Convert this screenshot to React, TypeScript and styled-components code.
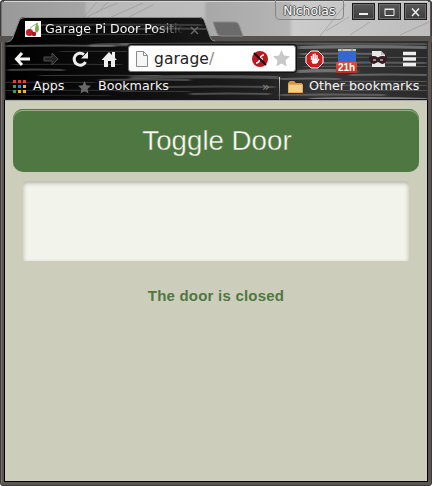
import React from "react";
import styled, { createGlobalStyle } from "styled-components";

const Global = createGlobalStyle`
  * { box-sizing: border-box; }
  body { margin: 0; background: #fff; overflow: hidden; }
`;

const Frame = styled.div`
  position: relative;
  width: 432px;
  height: 486px;
  display: flex;
  flex-direction: column;
  padding: 0 5px 5px;
  overflow: hidden;
  border-radius: 4px;
  background: #5b5451;
  font-family: "DejaVu Sans", sans-serif;
  box-shadow: inset 0 0 0 1px #3d3b3a, inset 2px 0 #77716e;
`;
const Backdrop = styled.svg`
  position: absolute;
  left: 0;
  top: 0;
`;
const TitleBar = styled.header`
  position: relative;
  height: 41px;
  display: flex;
  align-items: flex-start;
`;
const Tab = styled.div`
  display: flex;
  align-items: center;
  width: 208px;
  height: 24px;
  margin-top: 17px;
  padding-left: 20px;
`;
const TabTitle = styled.span`
  flex: none;
  width: 146px;
  margin-left: 4px;
  white-space: nowrap;
  font-size: 12.6px;
  line-height: 20px;
  color: #f4f4f4;
  mask-image: linear-gradient(90deg, #000 108px, transparent 139px);
`;
const TabClose = styled.svg`
  flex: none;
  margin-left: -1px;
  margin-top: 2px;
`;
const UserBadge = styled.div`
  width: 70px;
  height: 20px;
  margin-left: 63px;
  border: 1px solid #858585;
  border-top: 0;
  border-radius: 0 0 5px 5px;
  text-align: center;
  font: 12.3px/23px "DejaVu Sans", sans-serif;
  color: #fff;
  text-shadow: 1px 0 #555, -1px 0 #555, 0 1px #555, 0 -1px #555;
`;
const WindowButtons = styled.div`
  display: flex;
  gap: 3px;
  margin: 3px 0 0 8px;
`;
const WindowButton = styled.div`
  flex: none;
  width: 23px;
  height: 17px;
  border: 1px solid #1d1d1d;
  background: linear-gradient(#575757, #3d3d3d);
  box-shadow: inset 0 0 0 1px #6b6b6b;
  svg { display: block; }
`;
const Toolbar = styled.div`
  position: relative;
  display: flex;
  align-items: center;
  height: 35px;
  padding-left: 8px;
  svg { flex: none; }
`;
const NavButtons = styled.div`
  display: flex;
  gap: 11px;
  width: 115px;
`;
const Omnibox = styled.div`
  display: flex;
  align-items: center;
  width: 168px;
  height: 27px;
  padding-left: 7px;
  border: 1px solid #777;
  border-radius: 3px;
  background: #fff;
  box-shadow: 0 0 0 1px #111;
`;
const Address = styled.span`
  width: 97px;
  margin-left: 6px;
  font-size: 15.5px;
  line-height: 24px;
  letter-spacing: 0.05px;
  color: #222;
  i { font-style: normal; color: #888; }
`;
const Extensions = styled.div`
  display: flex;
  align-items: flex-start;
  height: 26px;
  margin-left: 9px;
`;
const Calendar = styled.div`
  width: 21px;
  height: 27px;
  margin: 2px 0 0 12px;
  display: flex;
  flex-direction: column;
  align-items: center;
`;
const CalendarBadge = styled.span`
  width: 21px;
  height: 11px;
  border-radius: 2px;
  background: linear-gradient(#df5140, #c52b1d);
  font: bold 10px/11px "Liberation Sans", sans-serif;
  color: #fff;
  text-align: center;
`;
const BookmarkBar = styled.nav`
  position: relative;
  display: flex;
  align-items: center;
  height: 24px;
  padding-left: 8px;
  font-size: 12.7px;
  line-height: 20px;
  color: #f4f4f4;
  white-space: nowrap;
  svg { flex: none; margin-top: -2px; }
`;
const BookmarkLabel = styled.span<{ $width: number; $gap: number }>`
  flex: none;
  width: ${(p) => p.$width}px;
  margin-left: ${(p) => p.$gap}px;
  margin-top: -4px;
`;
const Chevron = styled.span`
  width: 17px;
  margin-top: -2px;
  color: #888;
`;
const Divider = styled.span`
  width: 1px;
  height: 23px;
  margin-right: 7px;
  background: linear-gradient(#ccc, #555);
`;
const Page = styled.main`
  position: relative;
  flex: 1;
  display: flex;
  flex-direction: column;
  align-items: center;
  width: 423px;
  margin-bottom: -1px;
  padding-top: 9px;
  background: #cccebb;
  border: solid #000;
  border-width: 0 1px 1px 0;
  box-shadow: -1px 0 #000, inset 0 1px #aaa;
`;
const ToggleButton = styled.button`
  width: 406px;
  height: 63px;
  padding: 1px 0 0 2px;
  border: 0;
  border-radius: 10px;
  background: #4f7742;
  box-shadow: inset 0 1px #4f7742, inset 0 2px #9caf8e;
  font: 27.7px/62px "Liberation Sans", sans-serif;
  color: #fafaf2;
  -webkit-text-stroke: 0.35px #4f7742;
`;
const Display = styled.section`
  width: 386px;
  height: 80px;
  margin-top: 9px;
  border-radius: 3px 3px 0 0;
  background: #f2f3ea;
  box-shadow: inset 0 2px 4px #aeb0a5;
`;
const Status = styled.p`
  margin: 25px 0 0;
  font: bold 15px/20px "Liberation Sans", sans-serif;
  letter-spacing: 0.22px;
  color: #4f7742;
`;

const grain = [
  [5, 45, 110, 2, 0.4], [60, 51, 70, 1, 0.25], [8, 69, 56, 2, 0.35], [40, 75, 120, 1, 0.3],
  [90, 44, 50, 3, 0.35], [5, 82, 90, 1, 0.25], [100, 79, 90, 2, 0.35], [130, 76, 149, 3, 0.35],
  [165, 86, 110, 2, 0.3], [190, 93, 80, 2, 0.35], [298, 46, 130, 3, 0.5], [300, 53, 82, 2, 0.4],
  [318, 62, 109, 2, 0.35], [297, 70, 60, 3, 0.5], [350, 74, 78, 2, 0.4], [280, 78, 60, 2, 0.4],
  [315, 85, 113, 1, 0.3], [280, 94, 105, 2, 0.35], [310, 98, 118, 3, 0.6], [32, 24, 170, 2, 0.25],
  [28, 34, 125, 1, 0.3], [130, 28, 78, 2, 0.3], [5, 90, 130, 1, 0.25], [12, 64, 110, 1, 0.25],
  [120, 43, 308, 2, 0.3], [297, 57, 131, 1, 0.3], [305, 66, 123, 1, 0.35], [340, 81, 88, 1, 0.35],
  [340, 90, 88, 1, 0.3], [120, 91, 70, 1, 0.25], [20, 95, 90, 1, 0.18],
];

const Chrome = () => (
  <Backdrop width="432" height="101">
    <defs>
      <linearGradient id="sky" x2="1">
        <stop stopColor="#999" />
        <stop offset=".19" stopColor="#a5a5a5" />
        <stop offset=".2" stopColor="#b8b8b8" />
        <stop offset=".47" stopColor="#bdbdbd" />
        <stop offset=".48" stopColor="#a8a8a8" />
        <stop offset=".67" stopColor="#b5b5b5" />
        <stop offset=".68" stopColor="#ccc" />
        <stop offset="1" stopColor="#bdbdbd" />
      </linearGradient>
      <linearGradient id="wood" x2="1">
        <stop stopColor="#000" />
        <stop offset=".3" stopColor="#0e0e0e" />
        <stop offset=".6" stopColor="#1e1e1e" />
        <stop offset=".75" stopColor="#363636" />
        <stop offset="1" stopColor="#2a2a2a" />
      </linearGradient>
      <filter id="soft"><feGaussianBlur stdDeviation="2 .6" /></filter>
      <filter id="haze"><feGaussianBlur stdDeviation=".5" /></filter>
      <clipPath id="bar"><path d="M5 41H9Q12 41 13 37L19 21Q20 17 25 17H199Q203 17 204 20L210 37Q212 41 216 41H428V101H5Z" /></clipPath>
    </defs>
    <path fill="url(#sky)" d="M2 2H430V36H2Z" />
    <path d="M5 .5H427" stroke="#555" />
    <path d="M4 1.5H428" stroke="#d5d5d5" />
    <path filter="url(#haze)" d="M84 17Q91 9 97 2M87 17Q101 9 118 3M97 13L108 2M111 17L143 3M129 17L153 5M320 36L346 4M326 31L349 17M350 35L370 22M400 35L429 22" fill="none" stroke="#888" opacity=".45" />
    <path fill="#565250" d="M0 36H432V42H0Z" />
    <path fill="#6b6b6b" stroke="#8b8b8b" d="M213 22H235Q238 22 239 25L243 36H221Q218 36 217 33Z" />
    <g clipPath="url(#bar)">
      <path fill="url(#wood)" d="M5 15H428V101H5Z" />
      <g filter="url(#soft)">
        {grain.map(([x, y, w, h, o], i) => (
          <path key={i} fill="#b0b0b0" opacity={o} d={`M${x} ${y}Q${x + w * 0.45} ${y - h * 0.6} ${x + w} ${y}V${y + h}Q${x + w * 0.55} ${y + h * 0.5} ${x} ${y + h}Z`} />
        ))}
      </g>
    </g>
    <path fill="none" stroke="#888" d="M5 42Q12 42 13 37L19 21Q20 17.5 25 17.5H199Q203 17.5 204 20L210 37Q211 41 216 41.5" />
    <path d="M215 41.5H427" stroke="#333" />
    <path d="M5 99.5H428" stroke="#171717" />
    <path d="M5 42V101M427.5 42V101" stroke="#333" />
  </Backdrop>
);

const starPath = "M8.5 0L11 5.6L17 6.3L12.5 10.4L13.7 16.5L8.5 13.5L3.3 16.5L4.5 10.4L0 6.3L6 5.6Z";
const appColours = ["#e93c2f", "#e93c2f", "#e93c2f", "#35a35b", "#2883ec", "#f6b51e", "#35a35b", "#f6b51e", "#f6b51e"];

export default function App() {
  return (
    <>
      <Global />
      <Frame>
        <Chrome />
        <TitleBar>
          <Tab>
            <svg width="16" height="16">
              <path fill="#fff" d="M0 0H16V16H0Z" />
              <path d="M4 9Q7 4 13 2M10 12L12 2" stroke="#9baa74" fill="none" />
              <path fill="#83a951" d="M12 2Q16 8 12 12Q8 9 12 2Z" />
              <circle cx="4.5" cy="11.5" r="3.6" fill="#c5212c" />
              <circle cx="9" cy="13" r="2.2" fill="#aa1721" />
            </svg>
            <TabTitle>Garage Pi Door Positio</TabTitle>
            <TabClose width="9" height="9"><path d="M1 1L8 8M8 1L1 8" stroke="#666" strokeWidth="1.5" /></TabClose>
          </Tab>
          <UserBadge>Nicholas</UserBadge>
          <WindowButtons>
            <WindowButton><svg width="21" height="15"><path d="M6 10H15" stroke="#eee" strokeWidth="2" /></svg></WindowButton>
            <WindowButton><svg width="21" height="15"><path d="M6 5.5H15V11.5H6Z" stroke="#eee" fill="none" /><path d="M5.5 5H15.5" stroke="#eee" /></svg></WindowButton>
            <WindowButton><svg width="21" height="15"><path d="M7 4.5L14 12M14 4.5L7 12" stroke="#eee" strokeWidth="1.5" /></svg></WindowButton>
          </WindowButtons>
        </TitleBar>
        <Toolbar>
          <NavButtons>
            <svg width="18" height="18"><path d="M9 3L3.5 9L9 15M3 9H17" stroke="#f4f4f4" strokeWidth="3" fill="none" /></svg>
            <svg width="18" height="18"><path d="M10 3L16 9L10 15V11H2V7H10Z" stroke="#4e4e4e" fill="#242424" /></svg>
            <svg width="18" height="18"><path d="M14.5 12A6 6 0 1 1 13 4.5" stroke="#eee" strokeWidth="3" fill="none" /><path fill="#eee" d="M10 8.5H17V1.5Z" /></svg>
            <svg width="18" height="18"><path fill="#eee" d="M2 9.5L9 2L12 5V2H15V8L17 10H15V17H11V11H8V17H4V10H2Z" /></svg>
          </NavButtons>
          <Omnibox>
            <svg width="12" height="16"><path d="M.5 .5H7.5L11.5 4.5V15.5H.5ZM7.5 .5V4.5H11.5" fill="#f6f6f6" stroke="#8b8b8b" /></svg>
            <Address>garage<i>/</i></Address>
            <svg width="18" height="18" viewBox="0 0 18 18">
              <circle cx="9" cy="9" r="8" fill="#bb1721" />
              <path d="M13 5Q10 5 9 9Q8 13 5 13M8 9H12" stroke="#fff" strokeWidth="1.6" fill="none" />
              <path d="M3 3L15 15" stroke="#111" strokeWidth="2" />
            </svg>
            <svg width="25" height="18" viewBox="-4 0 25 18"><path d={starPath} fill="#c8c8c8" /></svg>
          </Omnibox>
          <Extensions>
            <svg width="19" height="26">
              <path d="M6 5H13L18 10V17L13 22H6L1 17V10Z" fill="#cc1e20" stroke="#fff" />
              <path d="M6.5 14V10M8.3 13V8M10.1 13V7.5M12 13V9M7 15L8 17H11L14 13" stroke="#fff" strokeWidth="1.4" fill="none" />
              <path fill="#fff" d="M6 12.5H12.5V17H8.5Z" />
            </svg>
            <Calendar>
              <svg width="20" height="14"><path fill="#3269d1" d="M1 3H19V14H1Z" /><path fill="#c4c4c4" d="M1 1H19V3H1Z" /><path d="M5 0V3M15 0V3" stroke="#777" /></svg>
              <CalendarBadge>21h</CalendarBadge>
            </Calendar>
            <svg width="45" height="26" viewBox="-12 0 45 26">
              <path fill="#e8e8e8" d="M3 5H12L16 9V21H3Z" />
              <path fill="#bbb" d="M12 5V9H16Z" />
              <path fill="#351c20" d="M0 11Q5 9 9 11.5Q13 9 18 11Q18 18 13 18L9 16L5 18Q0 18 0 11Z" />
              <path d="M4 14H7M11 14H14" stroke="#b9a9ac" strokeWidth="1.3" />
            </svg>
            <svg width="15" height="26"><path d="M1 7.5H14M1 13H14M1 18.5H14" stroke="#eee" strokeWidth="3.4" /></svg>
          </Extensions>
        </Toolbar>
        <BookmarkBar>
          <svg width="13" height="14">{appColours.map((c, i) => <path key={i} fill={c} d={`M${(i % 3) * 5} ${Math.floor(i / 3) * 5}h3v3h-3z`} />)}</svg>
          <BookmarkLabel $width={45} $gap={7}>Apps</BookmarkLabel>
          <svg width="13" height="13" viewBox="0 0 17 17"><path d={starPath} fill="#686868" /></svg>
          <BookmarkLabel $width={164} $gap={7}>Bookmarks</BookmarkLabel>
          <Chevron>»</Chevron>
          <Divider />
          <svg width="17" height="15"><path fill="#d69842" d="M1 3L3 1H7L9 3H15V13H1Z" /><path fill="#f5cf82" stroke="#e2a958" d="M1.5 4.5H15.5V12.5H1.5Z" /></svg>
          <BookmarkLabel $width={114} $gap={5}>Other bookmarks</BookmarkLabel>
        </BookmarkBar>
        <Page>
          <ToggleButton>Toggle Door</ToggleButton>
          <Display />
          <Status>The door is closed</Status>
        </Page>
      </Frame>
    </>
  );
}
